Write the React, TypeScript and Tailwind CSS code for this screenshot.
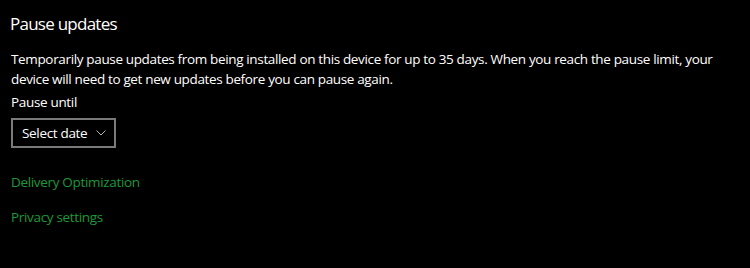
export default function App() {
  return (
    <div className="h-[268px] w-[750px] overflow-hidden bg-black px-[11px] pt-[11px] font-['Open_Sans',sans-serif] text-white">
      <h2 className="-ml-px text-[17px] leading-[26px] tracking-[-0.75px]">Pause updates</h2>

      <p className="mt-[12px] text-[13.5px] leading-[20px] tracking-[-0.35px]">
        Temporarily pause updates from being installed on this device for up to 35 days. When you reach the pause limit, your
        <br />
        device will need to get new updates before you can pause again.
      </p>

      <div className="mt-[3px] text-[13.5px] leading-[20px] tracking-[-0.33px]">Pause until</div>

      <button
        type="button"
        className="mt-[6px] flex h-[30px] w-[105px] items-center border-2 border-[#7a7a7a] pl-[9px] pr-[8px] text-[13.5px] tracking-[-0.33px] text-white"
      >
        <span>Select date</span>
        <svg className="ml-auto" width="10" height="6" viewBox="0 0 10 6" fill="none">
          <path d="M0.5 0.5 L5 5 L9.5 0.5" stroke="#b4b4b4" strokeWidth="1" />
        </svg>
      </button>

      <div className="mt-[24px] flex flex-col gap-[15px] text-[13.5px] leading-[20px] tracking-[-0.33px] text-[#1a9a3c]">
        <a href="#delivery">Delivery Optimization</a>
        <a href="#privacy">Privacy settings</a>
      </div>
    </div>
  );
}
